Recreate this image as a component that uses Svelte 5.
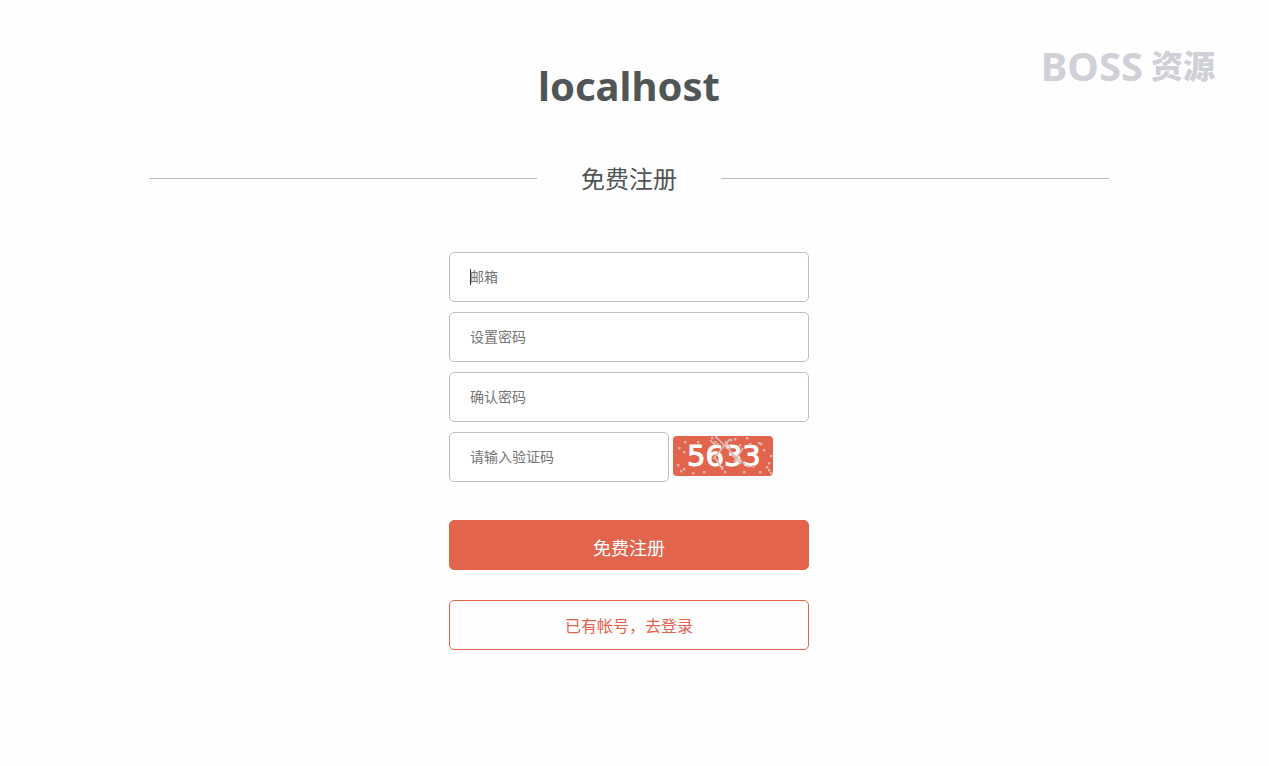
<script>
    let email = $state("");
    let password = $state("");
    let confirm = $state("");
    let code = $state("");

    // noise of the captcha, [x, y] of each dot
    const dots = [
        [5, 11], [10, 15], [11, 5], [4, 28], [7, 34], [10, 32], [19, 36], [24, 5],
        [30, 35], [38, 1], [42, 0], [41, 5], [43, 7], [48, 30], [51, 35], [57, 3],
        [61, 2], [70, 35], [73, 1], [76, 7], [79, 29], [85, 6], [87, 7], [90, 13],
        [93, 30], [95, 26], [97, 19], [95, 33], [86, 35], [74, 29], [97, 36], [66, 8],
    ];
</script>

<div class="page">
    <div class="brand">BOSS <span>资源</span></div>

    <h1>localhost</h1>

    <div class="title">
        <h2>免费注册</h2>
    </div>

    <form onsubmit={(e) => e.preventDefault()}>
        <div class="field">
            <input type="text" aria-label="邮箱" placeholder="邮箱" bind:value={email} />
            <span class="caret"></span>
        </div>
        <div class="field">
            <input type="password" aria-label="设置密码" placeholder="设置密码" bind:value={password} />
        </div>
        <div class="field">
            <input type="password" aria-label="确认密码" placeholder="确认密码" bind:value={confirm} />
        </div>
        <div class="field code">
            <input type="text" aria-label="请输入验证码" placeholder="请输入验证码" bind:value={code} />
            <svg class="captcha" viewBox="0 0 100 40" width="100" height="40">
                <rect width="100" height="40" fill="#e2644c" />
                <text x="14" y="30">5633</text>
                <g stroke="#e0bdb8" stroke-width="1.6" fill="none">
                    <path d="M37 4l5 5M43 1l10 10 8 8 12 10M57 3l-10 12-7 8M42 22l8 12M52 5l6 8M70 12l-9 14M58 18l10 10" />
                </g>
                {#each dots as [x, y]}
                    <rect {x} {y} width="2.4" height="2.4" fill="#e0b5ae" />
                {/each}
            </svg>
        </div>

        <button type="submit">免费注册</button>
        <a href="#login">已有帐号，去登录</a>
    </form>
</div>

<style>
    :global(body) {
        margin: 0;
        background: #fefefe;
    }

    .page {
        position: relative;
        padding: 56px 11px 56px 0;
        color: #505555;
        font-family: "Noto Sans", "Noto Sans CJK SC", sans-serif;
    }

    .brand {
        position: absolute;
        top: 39px;
        right: 54px;
        display: flex;
        align-items: center;
        gap: 8px;
        color: #d0d0d7;
        font-size: 40px;
        font-weight: bold;
        line-height: 54px;
    }

    .brand span {
        font-size: 32px;
        font-weight: 900;
    }

    h1 {
        margin: 0;
        font-size: 40px;
        line-height: 60px;
        text-align: center;
    }

    .title {
        display: flex;
        align-items: center;
        max-width: 960px;
        margin: 44px auto 0;
    }

    .title::before,
    .title::after {
        content: "";
        flex: 1;
        height: 1px;
        background: #bdbdbd;
    }

    h2 {
        margin: 0;
        padding: 2px 44px 0;
        font-size: 24px;
        font-weight: normal;
        line-height: 34px;
    }

    form {
        max-width: 360px;
        margin: 56px auto 0;
    }

    .field {
        position: relative;
        display: flex;
        margin-bottom: 10px;
    }

    input {
        box-sizing: border-box;
        width: 100%;
        height: 50px;
        padding: 0 20px 2px;
        border: 1px solid #bdbfc2;
        border-radius: 5px;
        outline: none;
        background: #fff;
        color: #505555;
        font-family: inherit;
        font-size: 14px;
    }

    input::placeholder {
        color: #757575;
    }

    .caret {
        position: absolute;
        top: 17px;
        left: 21px;
        width: 1px;
        height: 16px;
        background: #333;
    }

    .code {
        align-items: center;
        gap: 4px;
    }

    .code input {
        width: 220px;
    }

    .captcha {
        margin-bottom: 2px;
        border-radius: 4px;
    }

    .captcha text {
        fill: #fff;
        stroke: #fff;
        stroke-width: 1px;
        font-family: "DejaVu Sans", sans-serif;
        font-size: 29px;
    }

    button,
    a {
        display: block;
        box-sizing: border-box;
        width: 100%;
        height: 50px;
        border: 1px solid #e2644c;
        border-radius: 5px;
        text-align: center;
    }

    button {
        margin-top: 38px;
        padding: 4px 0 0;
        background: #e2644c;
        color: #fff;
        font-family: inherit;
        font-size: 18px;
        cursor: pointer;
    }

    a {
        margin-top: 30px;
        color: #e2644c;
        font-size: 16px;
        line-height: 50px;
        text-decoration: none;
    }
</style>
